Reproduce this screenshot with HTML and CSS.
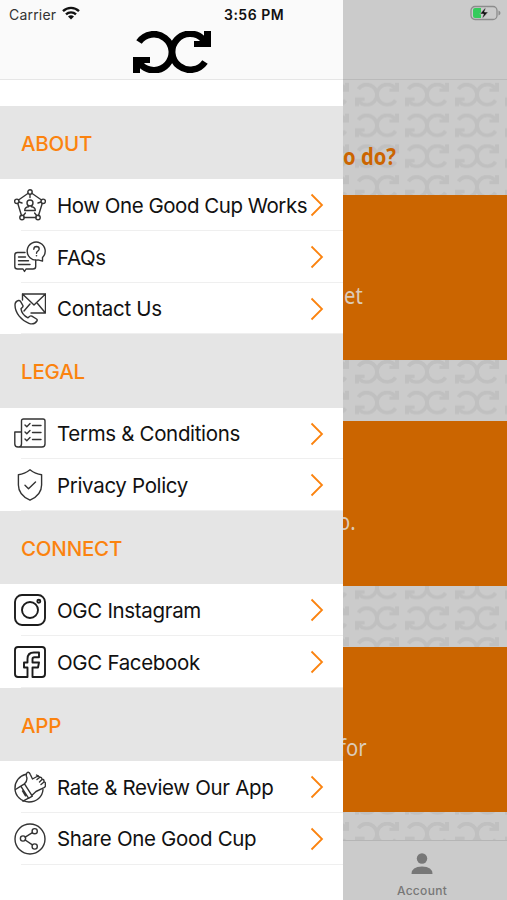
FILE: index.html
```html
<!DOCTYPE html>
<html lang="en">
<head>
    <meta charset="UTF-8">
    <meta name="viewport" content="width=device-width, initial-scale=1.0">
    <title>One Good Cup</title>
    <link rel="stylesheet" href="styles.css">
</head>
<body>
    <svg class="defs" width="0" height="0">
        <symbol id="logo" viewBox="0 0 78 42">
            <path d="M6 11A18 18 0 1 1 8 33.800M72 31A18 18 0 1 1 70 8.200" fill="none" stroke="currentColor" stroke-width="6.6"/>
            <path d="M0 26h17v6h-6L7 36v6H0zM78 16H61v-6h6L71 6V0h7z" fill="currentColor"/>
        </symbol>
        <symbol id="chevron" viewBox="0 0 14 24">
            <path d="M1.5 1.5L12 12 1.5 22.5" fill="none" stroke="currentColor" stroke-width="1.8"/>
        </symbol>
    </svg>

    <div class="screen">
        <aside class="drawer">
            <header class="drawer-top">
                <div class="status">
                    <span class="carrier">Carrier</span>
                    <svg class="wifi" viewBox="0 0 18 14">
                        <g fill="none" stroke="#111" stroke-width="2.4">
                            <path d="M1 5.1a11.6 11.6 0 0 1 16 0"/>
                            <path d="M4 8.4a7.3 7.3 0 0 1 10 0"/>
                        </g>
                        <path d="M9 13.6l-3-3a4.3 4.3 0 0 1 6 0z" fill="#111"/>
                    </svg>
                    <span class="time">3:56 PM</span>
                </div>
                <svg class="logo"><use href="#logo"/></svg>
            </header>

            <nav class="menu">
                <h2>ABOUT</h2>
                <a class="item tight">
                    <svg class="icon" viewBox="0 0 32 32">
                        <path d="M14.2 4.2L4.5 11M17.8 4.2l9.7 6.8M3.8 14.5l3.7 12M28.2 14.5l-3.7 12M10 28.5h12"/>
                        <circle cx="16" cy="3" r="2.2"/><circle cx="2.8" cy="12.3" r="2.2"/><circle cx="29.2" cy="12.3" r="2.2"/><circle cx="8" cy="28.5" r="2.2"/><circle cx="24" cy="28.5" r="2.2"/>
                        <path d="M16 5.5v3M5 13l3 1M27 13l-3 1M9.4 26.5l2-2.5M22.6 26.5l-2-2.5"/>
                        <circle cx="16" cy="14" r="3"/><path d="M14.500 16.500v1.300c-3 .4-3.800 1.500-3.800 3.700h10.600c0-2.200-.8-3.300-3.800-3.700v-1.300"/>
                    </svg>
                    <span>How One Good Cup Works</span>
                    <svg class="arrow"><use href="#chevron"/></svg>
                </a>
                <a class="item">
                    <svg class="icon" viewBox="0 0 32 32">
                        <path d="M11 11.500H3.500Q.8 11.500.8 14v11.500Q.8 28 3.500 28H9l1.500 2.500L12 28h7q2.700 0 2.700-2.500v-6.500"/>
                        <path d="M4.500 16h7M4.500 19.700h10M4.500 23.500H16"/>
                        <path d="M28.500 16.500a9 9 0 1 0-4.500 2.400l4.500 1.200zM19.800 8.200q.1-2.700 2.700-2.700 2.700.1 2.700 2.500c0 2-2.700 2-2.700 4.200"/>
                        <circle class="dot" cx="22.500" cy="14.700" r=".8"/>
                    </svg>
                    <span>FAQs</span>
                    <svg class="arrow"><use href="#chevron"/></svg>
                </a>
                <a class="item">
                    <svg class="icon" viewBox="0 0 32 32">
                        <path d="M8.500 7V1h23v19H17M8.500 1l11.500 11L31.500 1M10 18l6-7M31 19.500l-7.500-9"/>
                        <path d="M1 12q0-3.500 3.500-4.500 1.300-.2 2 .8l2.300 4q.6 1.300-.6 2.200L7 15.800c.5 4 3.500 7.200 7 9l1.800-1.600q1-.7 2.100 0l4.600 2.800q1.200.8.400 2-2.900 4.200-7.900 2.300C7.500 27.500 1 20 1 12z"/>
                    </svg>
                    <span>Contact Us</span>
                    <svg class="arrow"><use href="#chevron"/></svg>
                </a>

                <h2>LEGAL</h2>
                <a class="item">
                    <svg class="icon" viewBox="0 0 32 32">
                        <path d="M7.500 3q0-2 2-2H29q2 0 2 2v23q0 3-3 3H4q-3.200-.2-3.200-3V14h6.700v12q0 3-3 3M7.500 3v11"/>
                        <path d="M11 7l1.800 1.800L16 5.500M11 14l1.800 1.800L16 12.500M11 21l1.800 1.800L16 19.500M18.500 7.500h8.500M18.500 14.500h8.500M18.500 21.500h8.500"/>
                    </svg>
                    <span>Terms &amp; Conditions</span>
                    <svg class="arrow"><use href="#chevron"/></svg>
                </a>
                <a class="item">
                    <svg class="icon" viewBox="0 0 32 32">
                        <path d="M16 .8Q21.500 5.200 27.600 5.800V16q0 10-11.600 15.200Q4.400 26 4.400 16V5.800Q10.500 5.200 16 .8zM11 16.200l3.500 3.500 7-6.700"/>
                    </svg>
                    <span>Privacy Policy</span>
                    <svg class="arrow"><use href="#chevron"/></svg>
                </a>

                <h2>CONNECT</h2>
                <a class="item">
                    <svg class="icon bold" viewBox="0 0 32 32">
                        <rect x="1" y="1" width="30" height="30" rx="7"/>
                        <circle cx="16" cy="16" r="8"/><circle cx="24.800" cy="7.200" r="1.500"/>
                    </svg>
                    <span>OGC Instagram</span>
                    <svg class="arrow"><use href="#chevron"/></svg>
                </a>
                <a class="item">
                    <svg class="icon bold" viewBox="0 0 32 32">
                        <path d="M13.500 31H4q-3 0-3-3V4q0-3 3-3h24q3 0 3 3v24q0 3-3 3h-9.500v-9.500H24l1-5h-6.500V13q0-1.800 2-1.800H25V6.500h-5q-6.500 0-6.500 6.500v3.500H10v5h3.500z"/>
                    </svg>
                    <span>OGC Facebook</span>
                    <svg class="arrow"><use href="#chevron"/></svg>
                </a>

                <h2>APP</h2>
                <a class="item">
                    <svg class="icon" viewBox="0 0 32 32">
                        <path d="M12 3.200A14 14 0 0 0 1 17.500c0 7.500 6.500 13.500 14 13.500 7.500 0 13.500-5 14-12.500M22.500 4l2 1.200"/>
                        <path d="M1.500 18.500l5.300-3.300 7.700 12-5.500 3M6.800 15.200l3.700-2.400 7.800 12.300-3.800 2.200M10.500 12.800q3.500-3.600 2-7.300-.8-3.500 1.500-4.300 1.500-.2 2.200 2l2.300 4.800 4.500-2.500q2-.8 2.500 1 2.300-.8 2.500 1.800 2.200-.2 2 2.400 2 .8 1.300 2.800.7 2-1.300 3.200L22 20.500l-4 3.700M25.500 6.500L23 8.500M28 8.500L25.500 11M30 11l-3 2.500M8.500 20l3 4.800"/>
                    </svg>
                    <span>Rate &amp; Review Our App</span>
                    <svg class="arrow"><use href="#chevron"/></svg>
                </a>
                <a class="item">
                    <svg class="icon" viewBox="0 0 32 32">
                        <circle cx="16" cy="16" r="15"/>
                        <circle cx="9" cy="15.500" r="2.600"/><circle cx="20.700" cy="8.200" r="2.600"/><circle cx="20.700" cy="23.500" r="2.600"/>
                        <path d="M11.200 14.100l7.200-4.500M11.200 17l7.200 4.900"/>
                    </svg>
                    <span>Share One Good Cup</span>
                    <svg class="arrow"><use href="#chevron"/></svg>
                </a>
            </nav>
        </aside>

        <main class="page">
            <header class="page-top">
                <svg class="battery" viewBox="0 0 31 16">
                    <rect x="1" y="1.500" width="26" height="13" rx="4" fill="none" stroke="#8c8c8c" stroke-width="1.300"/>
                    <path d="M28.500 5.500q2 .8 2 2.500t-2 2.500z" fill="#8c8c8c"/>
                    <path d="M5 3h6v10H5q-2 0-2-2V5q0-2 2-2z" fill="#35cb5b"/>
                    <path d="M16 2L9.800 9h3.700L12 14l6.200-7h-3.700z" fill="#111" stroke="#cbcbcb" stroke-width=".6"/>
                </svg>
            </header>
            <div class="content">
                <svg class="wallpaper" width="164" height="760">
                    <pattern id="cups" x="11" y="2.800" width="50" height="30.800" patternUnits="userSpaceOnUse">
                        <use href="#logo" x="1" y="0" width="44" height="23.700"/>
                    </pattern>
                    <rect width="164" height="760" fill="url(#cups)"/>
                </svg>
                <h1>o do?</h1>
                <section class="card"><p class="first">et</p></section>
                <section class="card"><p class="second">o.</p></section>
                <section class="card"><p class="third">for</p></section>
            </div>
            <footer class="tab">
                <svg class="person" viewBox="0 0 22 22">
                    <circle cx="11" cy="5.500" r="5.200"/><path d="M.5 21q0-7.500 10.500-7.500T21.500 21z"/>
                </svg>
                <span>Account</span>
            </footer>
        </main>
    </div>
</body>
</html>
```

FILE: styles.css
```css
body {
    margin: 0;
    font-family: Inter, "Liberation Sans", sans-serif;
    color: #111;
}
.defs {
    position: absolute;
}
.screen {
    display: flex;
    width: 507px;
    height: 900px;
    overflow: hidden;
}

/* drawer */
.drawer {
    width: 343px;
    flex: none;
    background: #fff;
}
.drawer-top {
    box-sizing: border-box;
    height: 80px;
    background: #fafafa;
    border-bottom: 1px solid #e6e6e6;
}
.status {
    display: flex;
    align-items: center;
    height: 28px;
    padding-left: 9px;
    font-size: 14px;
}
.carrier {
    width: 47px;
    color: #333;
    letter-spacing: 0.2px;
}
.wifi {
    width: 18px;
    height: 14px;
    margin-left: 6px;
    margin-top: -3px;
}
.time {
    margin-left: 144px;
    font-weight: 600;
    letter-spacing: 0.5px;
    white-space: nowrap;
}
.logo {
    display: block;
    width: 78px;
    height: 42px;
    margin: 3px 0 0 133px;
    color: #000;
}
.menu {
    padding-top: 26px;
}
.menu h2 {
    display: flex;
    align-items: center;
    box-sizing: border-box;
    height: 73.2px;
    margin: 0;
    padding: 1.5px 0 0 21px;
    background: #e5e5e5;
    color: #fb830f;
    font-size: 20.5px;
    font-weight: 500;
    letter-spacing: -0.2px;
}
.item {
    display: flex;
    align-items: center;
    box-sizing: border-box;
    height: 51.75px;
    padding: 0 18px 0 14px;
    font-size: 20.5px;
    letter-spacing: -0.33px;
    white-space: nowrap;
    background: linear-gradient(#efefef, #efefef) 21px 100% / 322px 1px no-repeat;
}
.item.tight {
    letter-spacing: -0.47px;
}
.item span {
    width: 253px;
    margin-left: 11px;
    padding-top: 0.6px;
}
.icon {
    width: 32px;
    height: 32px;
    flex: none;
    fill: none;
    stroke: #333;
    stroke-width: 1.4;
    stroke-linejoin: round;
    stroke-linecap: round;
}
.icon.bold {
    stroke: #1c1c1c;
    stroke-width: 1.9;
}
.icon .dot {
    fill: #333;
    stroke: none;
}
.arrow {
    width: 14px;
    height: 24px;
    flex: none;
    color: #fb830f;
}

/* dimmed page behind the drawer */
.page {
    display: flex;
    flex-direction: column;
    flex: 1;
    background: #cbcbcb;
}
.page-top {
    box-sizing: border-box;
    height: 80px;
    padding: 5px 0 0 127px;
    border-bottom: 1px solid #bababa;
}
.battery {
    display: block;
    width: 31px;
    height: 16px;
}
.content {
    position: relative;
    height: 760px;
    overflow: hidden;
}
.wallpaper {
    position: absolute;
    top: 0;
    left: 0;
    color: #c0c0c0;
}
.content h1 {
    position: relative;
    height: 115px;
    margin: 0;
    color: #cb6500;
    font: 700 23px/152px "Noto Sans", sans-serif;
    transform: scaleX(0.88);
    transform-origin: left;
}
.card {
    position: relative;
    height: 165px;
    margin-bottom: 61px;
    background: #cb6500;
    overflow: hidden;
}
.card p {
    margin: 85px 0 0;
    color: #dccbb9;
    font: 23px/30px "Noto Sans", sans-serif;
    transform: scaleX(0.88);
    transform-origin: left;
}
.card .first {
    margin-left: 1px;
}
.card .second {
    margin-left: -5px;
}
.card .third {
    margin-left: -4px;
}
.tab {
    box-sizing: border-box;
    display: flex;
    flex-direction: column;
    align-items: center;
    height: 60px;
    padding: 12px 6px 0 0;
    border-top: 1px solid #b5b5b5;
    color: #777;
    font-size: 12px;
    font-weight: 500;
    letter-spacing: 0.3px;
}
.person {
    width: 22px;
    height: 22px;
    margin-bottom: 8px;
    fill: #777;
}
```
